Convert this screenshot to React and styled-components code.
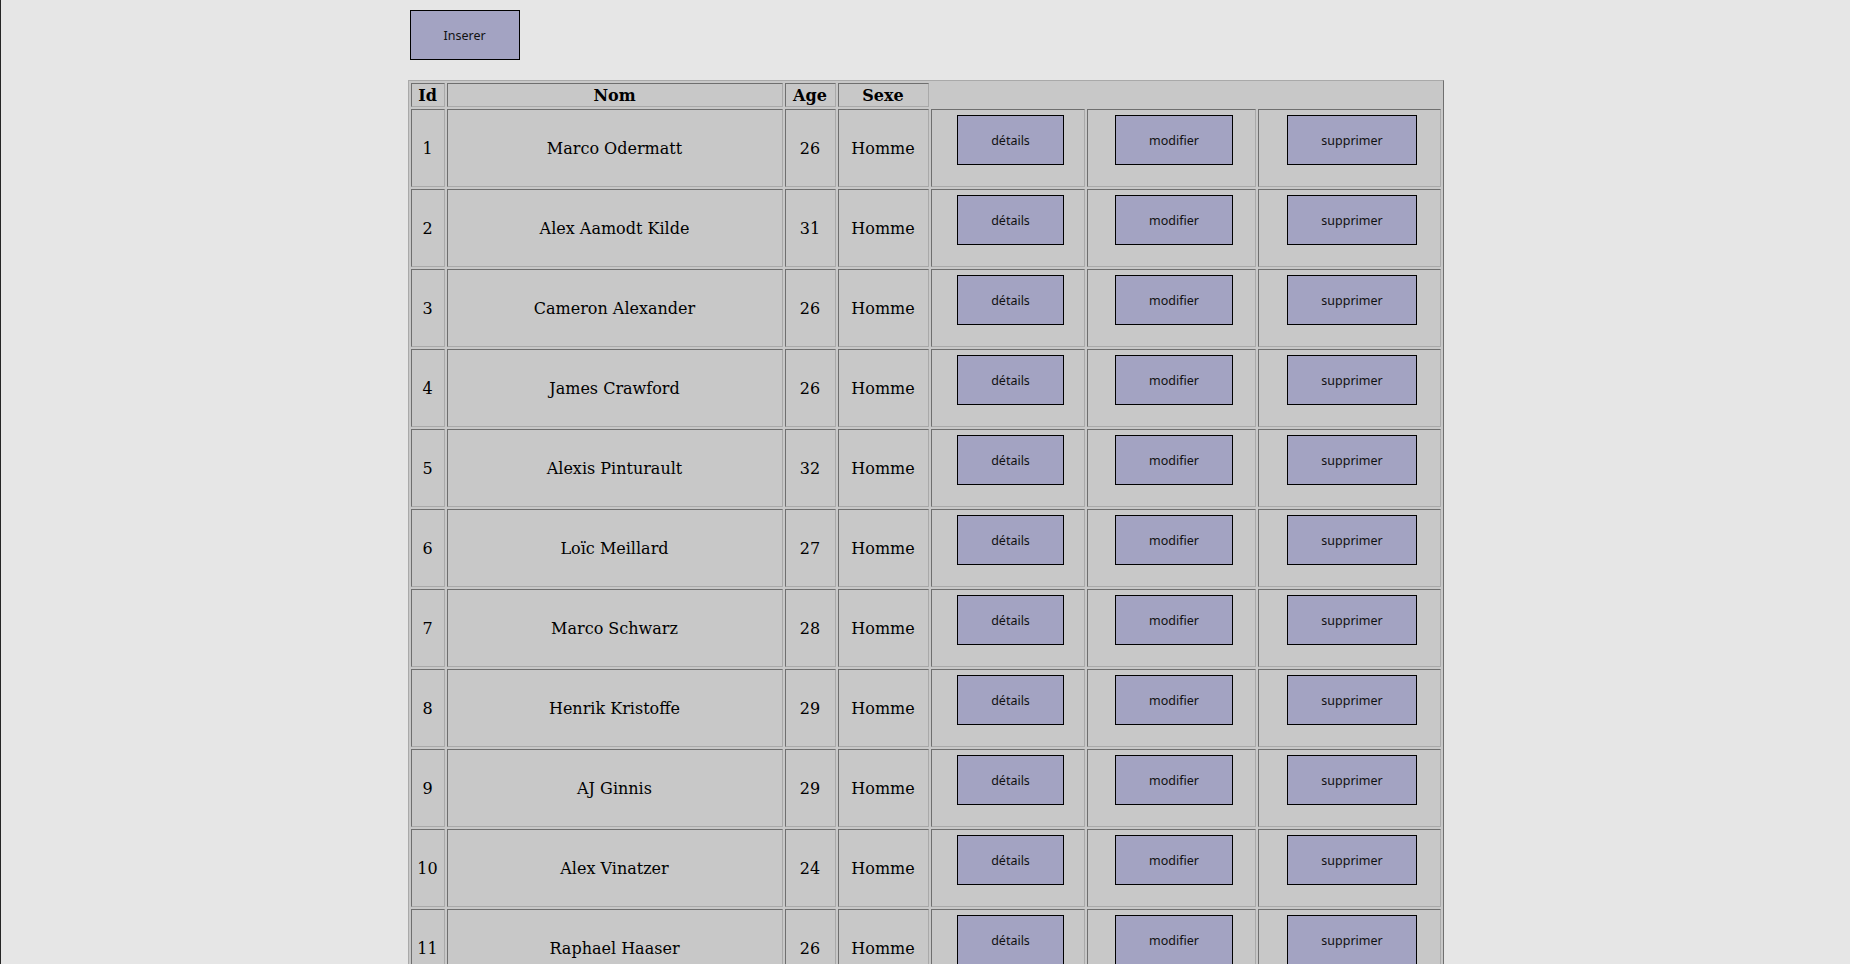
import React from "react";
import styled, { createGlobalStyle } from "styled-components";

const GlobalStyle = createGlobalStyle`
  html {
    background: #e6e6e6;
    border-left: 1px solid #262626;
    min-height: 100%;
  }
  body {
    margin: 8px;
    background: #e6e6e6;
    font-family: "DejaVu Serif", serif;
    font-size: 16px;
    color: #000;
  }
`;

const Page = styled.main`
  width: 1036px;
  margin: 0 auto;
`;

const Toolbar = styled.div`
  display: flex;
  margin-bottom: 18px;
`;

const ActionButton = styled.button`
  box-sizing: border-box;
  height: 50px;
  margin: 2px;
  padding: 0 33px;
  background: #a3a3c2;
  border: 1px solid #000;
  border-radius: 0;
  font-family: "Noto Sans", "DejaVu Sans", sans-serif;
  font-size: 12.5px;
  color: #111;
  cursor: pointer;
`;

const Table = styled.table`
  width: 1036px;
  table-layout: fixed;
  border-collapse: separate;
  border-spacing: 2px;
  background: #c8c8c8;
  border-style: solid;
  border-width: 1px;
  border-color: #a9a9a9 #6f6f6f #6f6f6f #a9a9a9;
`;

const cellBorder = `
  box-sizing: border-box;
  border-style: solid;
  border-width: 1px;
  border-color: #6f6f6f #a9a9a9 #a9a9a9 #6f6f6f;
  padding: 1px;
  text-align: center;
  vertical-align: middle;
`;

const HeadCell = styled.th`
  ${cellBorder}
  font-weight: bold;
  height: 24px;
`;

const Cell = styled.td`
  ${cellBorder}
  height: 78px;
  font-weight: normal;
`;

const ActionCell = styled.td`
  ${cellBorder}
  height: 78px;
  padding-left: 7px;
`;

const ActionForm = styled.form`
  display: flex;
  justify-content: center;
  align-items: center;
  height: 58px;
  margin: 0 0 16px;
`;

const columns = [34, 336, 51, 91, 154, 169, 183];

const riders = [
  [1, "Marco Odermatt", 26],
  [2, "Alex Aamodt Kilde", 31],
  [3, "Cameron Alexander", 26],
  [4, "James Crawford", 26],
  [5, "Alexis Pinturault", 32],
  [6, "Loïc Meillard", 27],
  [7, "Marco Schwarz", 28],
  [8, "Henrik Kristoffe", 29],
  [9, "AJ Ginnis", 29],
  [10, "Alex Vinatzer", 24],
  [11, "Raphael Haaser", 26],
];

const actions = ["détails", "modifier", "supprimer"];

export default function App() {
  return (
    <>
      <GlobalStyle />
      <Page>
        <Toolbar>
          <ActionButton type="button">Inserer</ActionButton>
        </Toolbar>
        <Table>
          <colgroup>
            {columns.map((w, i) => (
              <col key={i} style={{ width: w }} />
            ))}
          </colgroup>
          <thead>
            <tr>
              <HeadCell>Id</HeadCell>
              <HeadCell>Nom</HeadCell>
              <HeadCell>Age</HeadCell>
              <HeadCell>Sexe</HeadCell>
            </tr>
          </thead>
          <tbody>
            {riders.map(([id, name, age]) => (
              <tr key={id}>
                <Cell>{id}</Cell>
                <Cell>{name}</Cell>
                <Cell>{age}</Cell>
                <Cell>Homme</Cell>
                {actions.map((a) => (
                  <ActionCell key={a}>
                    <ActionForm onSubmit={(e) => e.preventDefault()}>
                      <ActionButton type="button">{a}</ActionButton>
                    </ActionForm>
                  </ActionCell>
                ))}
              </tr>
            ))}
          </tbody>
        </Table>
      </Page>
    </>
  );
}
